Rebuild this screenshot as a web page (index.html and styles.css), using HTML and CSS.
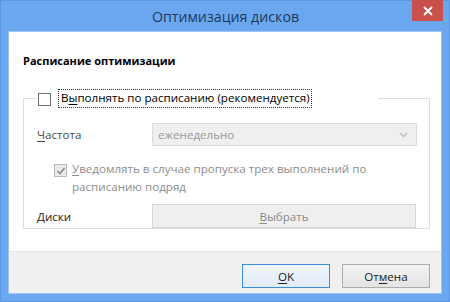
FILE: index.html
```html
<!DOCTYPE html>
<html lang="ru">
<head>
  <meta charset="UTF-8" />
  <title>Оптимизация дисков</title>
  <link rel="stylesheet" href="styles.css">
</head>
<body>
  <div class="window">
    <div class="titlebar">
      <span class="title">Оптимизация дисков</span>
      <button class="close">
        <svg width="10" height="10" viewBox="0 0 10 10"><path d="M1 1L9 9M9 1L1 9" stroke="#fff" stroke-width="2"/></svg>
      </button>
    </div>

    <div class="client">
      <div class="content">
        <h2>Расписание оптимизации</h2>

        <fieldset class="group">
          <legend>
            <span class="box"></span>
            <span class="focus">В<u>ы</u>полнять по расписанию (рекомендуется)</span>
          </legend>

          <div class="row">
            <span class="label"><u>Ч</u>астота</span>
            <div class="select">
              <span>еженедельно</span>
              <svg width="9" height="6" viewBox="0 0 9 6"><path d="M1 1L4.5 4.5L8 1" stroke="#bdbdbd" stroke-width="1.3" fill="none"/></svg>
            </div>
          </div>

          <div class="notify">
            <span class="box checked">
              <svg width="10" height="10" viewBox="0 0 10 10"><path d="M1.5 5L4 7.5L8.5 2" stroke="#8a8a8a" stroke-width="1.6" fill="none"/></svg>
            </span>
            <span class="notify-text"><u>У</u>ведомлять в случае пропуска трех выполнений по<br>расписанию подряд</span>
          </div>

          <div class="row disks">
            <span class="label dark"><u>Д</u>иски</span>
            <div class="pick"><u>В</u>ыбрать</div>
          </div>
        </fieldset>
      </div>

      <div class="footer">
        <button class="btn default"><u>O</u>K</button>
        <button class="btn">От<u>м</u>ена</button>
      </div>
    </div>
  </div>
</body>
</html>
```

FILE: styles.css
```css
body {
  margin: 0;
  font-family: 'Open Sans', 'Noto Sans', sans-serif;
  font-size: 11.6px;
}

.window {
  width: 450px;
  height: 302px;
  box-sizing: border-box;
  background-color: #6aa7ee;
  border: 1px solid #5a97e2;
  padding: 0 7px 7px;
  display: flex;
  flex-direction: column;
}

.titlebar {
  height: 30px;
  display: flex;
  justify-content: center;
  align-items: center;
  position: relative;
}

.title {
  font-size: 14.2px;
  color: #1c3a5e;
  margin-top: 1px;
  margin-left: 1px;
}

.close {
  position: absolute;
  top: -1px;
  right: -1px;
  width: 31px;
  height: 21px;
  border: none;
  background-color: #c9504b;
  display: flex;
  align-items: center;
  justify-content: center;
  padding: 0;
}

.client {
  flex: 1;
  display: flex;
  flex-direction: column;
  background: white;
  border: 1px solid #9fc4ef;
}

.content {
  flex: 1;
  padding: 21px 11px 0 14px;
}

h2 {
  margin: 0 0 20px 0;
  font-size: 11px;
  font-weight: bold;
  line-height: 16px;
  color: #000;
}

.group {
  margin: 0;
  padding: 0 12px 9px 13px;
  border: 1px solid #dcdcdc;
  height: 140px;
  box-sizing: border-box;
}

.group legend {
  padding: 0;
  margin-left: 0;
  width: 340px;
  display: flex;
  align-items: center;
  background: white;
  padding-left: 1px;
}

.box {
  width: 11px;
  height: 11px;
  border: 1px solid #6f6f6f;
  background: white;
  display: inline-block;
  box-sizing: content-box;
  margin-top: 2px;
}

.focus {
  margin-left: 7px;
  border: 1px dotted #333;
  padding: 0 1px 1px 2px;
  line-height: 16px;
  color: #000;
}

u {
  text-decoration-thickness: 1px;
  text-underline-offset: 2px;
}

.row {
  display: flex;
  align-items: center;
  margin-top: 15px;
}

.label {
  width: 115px;
  color: #4a4a4a;
}

.label.dark {
  color: #222;
}

.select {
  flex: 1;
  height: 23px;
  box-sizing: border-box;
  background: #efefef;
  border: 1px solid #dadada;
  display: flex;
  align-items: center;
  justify-content: space-between;
  padding: 0 8px 0 5px;
  color: #9a9a9a;
}

.notify {
  display: flex;
  align-items: flex-start;
  margin: 14px 0 0 17px;
}

.box.checked {
  background: #e8e8e8;
  border-color: #bcbcbc;
  display: flex;
  align-items: center;
  justify-content: center;
  margin-top: 4px;
}

.notify-text {
  margin-left: 5px;
  color: #8d8d8d;
  line-height: 18px;
}

.disks {
  margin-top: 8px;
}

.pick {
  flex: 1;
  height: 24px;
  box-sizing: border-box;
  background: #efefef;
  border: 1px solid #d6d6d6;
  display: flex;
  align-items: center;
  justify-content: center;
  color: #8a8a8a;
  margin-right: 1px;
}

.footer {
  height: 42px;
  background: #f0f0f0;
  border-top: 1px solid #e3e3e3;
  display: flex;
  justify-content: flex-end;
  align-items: center;
  gap: 12px;
  padding: 0 11px 0 0;
  box-sizing: border-box;
}

.btn {
  width: 88px;
  height: 24px;
  font-family: inherit;
  font-size: 11.6px;
  color: #222;
  background: linear-gradient(#f2f2f2, #e4e4e4);
  border: 1px solid #acacac;
  padding: 0;
  margin-top: 7px;
}

.btn.default {
  border-color: #3c8fe0;
  background: linear-gradient(#eef5fc, #e2ecf7);
}
```
